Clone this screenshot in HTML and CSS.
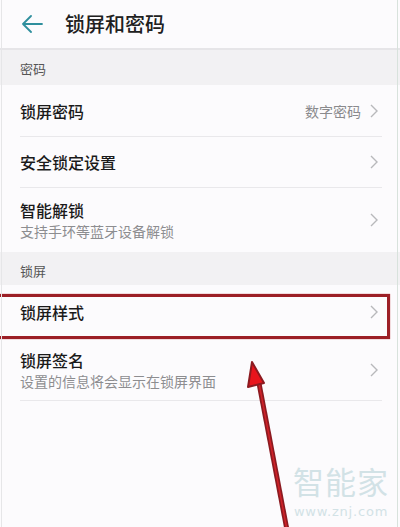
FILE: index.html
```html
<!DOCTYPE html>
<html>
<head>
<meta charset="utf-8">
<link rel="stylesheet" href="styles.css">
</head>
<body>
<div class="screen">
  <header class="topbar">
    <svg class="back" width="22" height="18" viewBox="0 0 22 18"><path d="M21 9H2M10 1L2 9l8 8" fill="none" stroke="#2f8f9d" stroke-width="1.8" stroke-linecap="round" stroke-linejoin="round"/></svg>
    <h1 class="title">锁屏和密码</h1>
  </header>
  <div class="section">密码</div>
  <div class="row r1">
    <div class="txt"><div class="main">锁屏密码</div></div>
    <span class="value">数字密码</span>
    <svg class="chev" width="8" height="14" viewBox="0 0 8 14"><path d="M1 1l6 6-6 6" fill="none" stroke="#b8b8bb" stroke-width="1.4"/></svg>
  </div>
  <div class="row r2">
    <div class="txt"><div class="main">安全锁定设置</div></div>
    <svg class="chev" width="8" height="14" viewBox="0 0 8 14"><path d="M1 1l6 6-6 6" fill="none" stroke="#b8b8bb" stroke-width="1.4"/></svg>
  </div>
  <div class="row r3 last">
    <div class="txt"><div class="main">智能解锁</div><div class="sub">支持手环等蓝牙设备解锁</div></div>
    <svg class="chev" width="8" height="14" viewBox="0 0 8 14"><path d="M1 1l6 6-6 6" fill="none" stroke="#b8b8bb" stroke-width="1.4"/></svg>
  </div>
  <div class="section s2">锁屏</div>
  <div class="row r4 plain">
    <div class="txt"><div class="main">锁屏样式</div></div>
    <svg class="chev" width="8" height="14" viewBox="0 0 8 14"><path d="M1 1l6 6-6 6" fill="none" stroke="#b8b8bb" stroke-width="1.4"/></svg>
  </div>
  <div class="row r5">
    <div class="txt"><div class="main">锁屏签名</div><div class="sub">设置的信息将会显示在锁屏界面</div></div>
    <svg class="chev" width="8" height="14" viewBox="0 0 8 14"><path d="M1 1l6 6-6 6" fill="none" stroke="#b8b8bb" stroke-width="1.4"/></svg>
  </div>

  <div class="redbox"></div>
  <svg class="arrow" width="400" height="527" viewBox="0 0 400 527">
    <line x1="287" y1="530" x2="258" y2="378" stroke="#8c1a20" stroke-width="5"/>
    <line x1="287" y1="530" x2="258" y2="378" stroke="#cf2128" stroke-width="1.6"/>
    <path d="M252 362 L264 383 L248 387 Z" fill="#e8141c" stroke="#8c1a20" stroke-width="2" stroke-linejoin="round"/>
  </svg>
  <div class="watermark">
    <div class="wm-big">智能家</div>
    <div class="wm-small">www.znj.com</div>
  </div>
  <div class="edge-right"></div>
  <div class="edge-left"></div>
</div>
</body>
</html>
```
FILE: styles.css
```css
html, body {
  margin: 0;
  padding: 0;
}
body {
  width: 400px;
  height: 527px;
  overflow: hidden;
  background: #fcfbfd;
  font-family: "Noto Sans CJK SC", "Noto Sans", sans-serif;
}
.screen {
  position: relative;
  width: 400px;
  height: 527px;
  background: #fcfbfd;
}
.topbar {
  height: 48px;
  display: flex;
  align-items: center;
  padding-left: 21px;
  border-bottom: 2px solid #e6e5e8;
  box-sizing: content-box;
}
.title {
  margin: 0 0 0 22px;
  font-size: 20px;
  font-weight: 500;
  color: #202020;
  line-height: 1;
}
.section {
  height: 35px;
  background: #f2f1f3;
  font-size: 13px;
  color: #555;
  padding-left: 20px;
  display: flex;
  align-items: center;
  padding-top: 2px;
  box-sizing: border-box;
}
.section.s2 {
  height: 33px;
  padding-top: 3px;
}
.row {
  display: flex;
  align-items: center;
  margin-left: 20px;
  margin-right: 18px;
  border-bottom: 1px solid #e9e8eb;
  box-sizing: border-box;
}
.row.last, .row.plain {
  border-bottom: none;
}
.r1 { height: 52px; }
.r2 { height: 51px; }
.r3 { height: 64px; }
.r4 { height: 54px; }
.r5 { height: 62px; }
.txt {
  flex: 1;
}
.main {
  font-size: 16px;
  font-weight: 500;
  color: #1a1a1a;
  line-height: 20px;
}
.sub {
  font-size: 14px;
  color: #8d8d90;
  line-height: 18px;
  margin-top: 2px;
}
.value {
  font-size: 14px;
  color: #8a8a8d;
  margin-right: 9px;
}
.chev {
  margin-right: 4px;
}
.redbox {
  position: absolute;
  left: -4px;
  top: 294px;
  width: 388px;
  height: 39px;
  border: 3px solid #9c1f26;
  box-shadow: 0 0 1px #c04048;
}
.arrow {
  position: absolute;
  left: 0;
  top: 0;
  pointer-events: none;
}
.watermark {
  position: absolute;
  left: 290px;
  top: 464px;
  width: 102px;
  text-align: center;
  color: #d2e2e6;
}
.wm-big {
  font-size: 31px;
  line-height: 34px;
  letter-spacing: 1px;
}
.wm-small {
  font-family: "DejaVu Sans", sans-serif;
  font-size: 13px;
  line-height: 16px;
  margin-top: 6px;
  letter-spacing: 0.8px;
}
.edge-right {
  position: absolute;
  right: 2px;
  top: 0;
  width: 1px;
  height: 527px;
  background: #d8e2dc;
}
.edge-left {
  position: absolute;
  left: 1px;
  top: 0;
  width: 1px;
  height: 527px;
  background: #e6e6e8;
}
```
